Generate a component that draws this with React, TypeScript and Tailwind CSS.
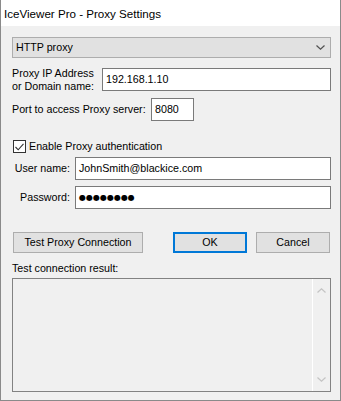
import { useState } from "react";

const font = { fontFamily: '"Liberation Sans", Arial, sans-serif' };

function Chevron({ up, className }: { up?: boolean; className?: string }) {
  return (
    <svg width="9" height="5" viewBox="0 0 9 5" className={className}>
      <path
        d={up ? "M0.5 4.5 L4.5 0.8 L8.5 4.5" : "M0.5 0.5 L4.5 4.2 L8.5 0.5"}
        fill="none"
        stroke="currentColor"
        strokeWidth="1.2"
      />
    </svg>
  );
}

export default function App() {
  const [auth, setAuth] = useState(true);

  return (
    <div
      className="w-[341px] h-[401px] bg-[#f0f0f0] border border-t-0 border-[#8a8a8a] flex flex-col text-[10.7px] text-black leading-[13px]"
      style={font}
    >
      {/* Title bar */}
      <div className="h-[26px] shrink-0 bg-white flex items-center pl-[3px] text-[11.6px]">
        IceViewer Pro - Proxy Settings
      </div>

      <div className="flex flex-col pl-[11px] pr-[9px]">
        {/* Proxy type */}
        <div className="mt-[11px] h-[21px] bg-[#e1e1e1] border border-[#adadad] flex items-center pl-[3px] pr-[5px]">
          <span className="flex-1">HTTP proxy</span>
          <Chevron className="text-[#505050]" />
        </div>

        {/* Address */}
        <div className="mt-[10px] flex items-start">
          <div className="w-[90px] -mt-[1px] leading-[13px]">
            Proxy IP Address
            <br />
            or Domain name:
          </div>
          <div className="flex-1 h-[23px] bg-white border border-[#7a7a7a] flex items-center pl-[3px]">
            192.168.1.10
          </div>
        </div>

        {/* Port */}
        <div className="mt-[5px] flex items-center">
          <div className="w-[139px]">Port to access Proxy server:</div>
          <div className="w-[43px] h-[23px] bg-white border border-[#7a7a7a] flex items-center pl-[3px]">
            8080
          </div>
        </div>

        {/* Enable auth */}
        <label className="mt-[19px] ml-[1px] h-[13px] flex items-center gap-[3px] cursor-pointer">
          <span
            onClick={() => setAuth(!auth)}
            className="w-[13px] h-[13px] bg-white border border-[#333333] flex items-center justify-center"
          >
            {auth && (
              <svg width="9" height="8" viewBox="0 0 9 8">
                <path d="M0.5 4 L3.2 6.8 L8.5 0.8" fill="none" stroke="#333" strokeWidth="1.1" />
              </svg>
            )}
          </span>
          <span>Enable Proxy authentication</span>
        </label>

        {/* User name */}
        <div className="mt-[4px] flex items-center">
          <div className="w-[63px] text-right pr-[5px]">User name:</div>
          <div className="flex-1 h-[23px] bg-white border border-[#7a7a7a] flex items-center pl-[3px]">
            JohnSmith@blackice.com
          </div>
        </div>

        {/* Password */}
        <div className="mt-[6px] flex items-center">
          <div className="w-[63px] text-right pr-[5px]">Password:</div>
          <div className="flex-1 h-[23px] bg-white border border-[#7a7a7a] flex items-center pl-[3px]">
            <span className="text-[8px]" style={{ fontFamily: '"DejaVu Sans", sans-serif' }}>
              ●●●●●●●●
            </span>
          </div>
        </div>

        {/* Buttons */}
        <div className="mt-[23px] flex items-center h-[21px]">
          <button className="ml-[1px] w-[130px] h-[21px] bg-[#e1e1e1] border border-[#adadad]">
            Test Proxy Connection
          </button>
          <button className="ml-[30px] w-[74px] h-[21px] bg-[#e1e1e1] border-2 border-[#0078d7]">
            OK
          </button>
          <button className="ml-[9px] w-[74px] h-[21px] bg-[#e1e1e1] border border-[#adadad]">
            Cancel
          </button>
        </div>

        {/* Result */}
        <div className="h-[25px] pt-[9px]">Test connection result:</div>
        <div className="h-[114px] border border-[#828282] bg-[#f0f0f0] flex">
          <div className="flex-1" />
          <div className="w-[18px] border-l border-white flex flex-col items-center justify-between py-[9px] text-[#c4c4c4]">
            <Chevron up />
            <Chevron />
          </div>
        </div>
      </div>
    </div>
  );
}
